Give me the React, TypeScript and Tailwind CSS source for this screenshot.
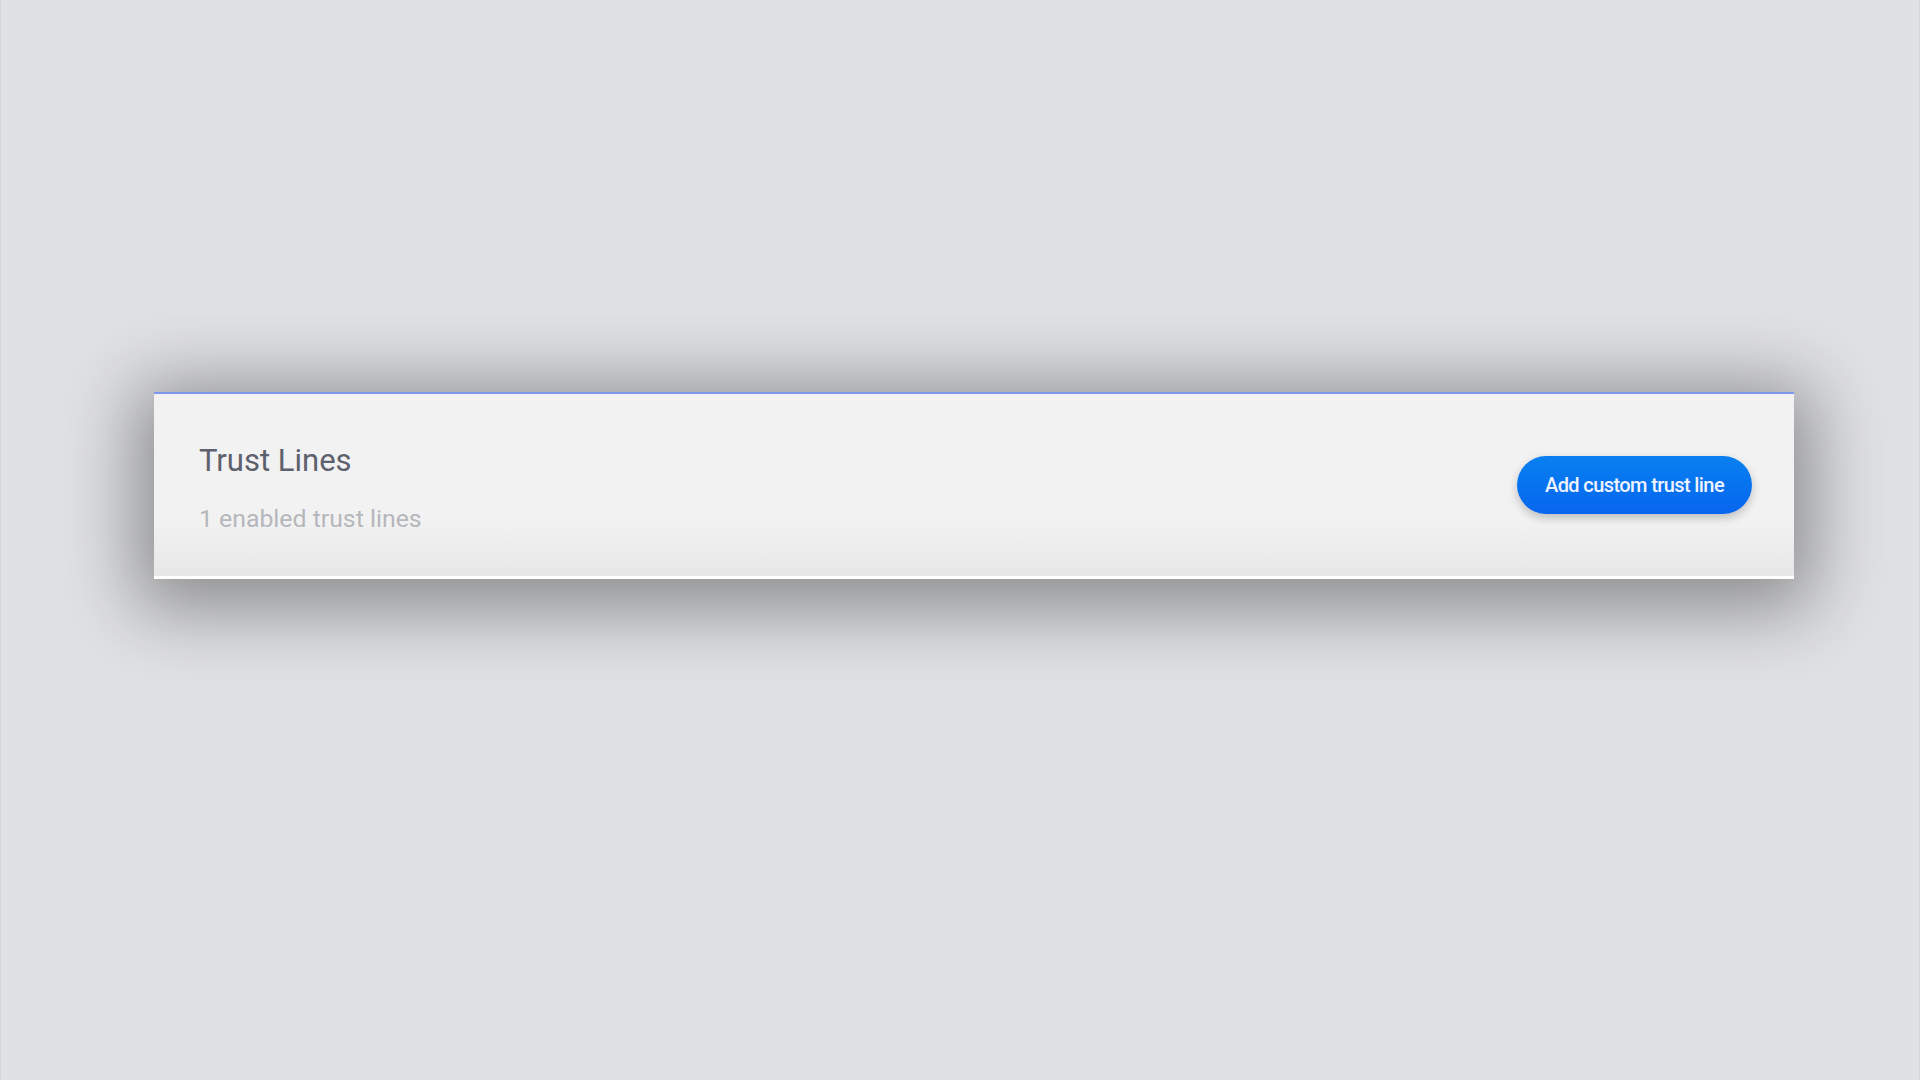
import React from "react";

export default function App() {
  return (
    <div
      className="min-h-screen w-full bg-[#e0e1e3] pl-[153px] pr-[125px] pt-[392px] border-x border-[#d6d7d9]"
      style={{ fontFamily: "Roboto, 'Noto Sans', sans-serif" }}
    >
      <div className="relative flex items-center justify-between border-t-2 border-[#7e96ee] border-b-[3px] border-b-white bg-gradient-to-b from-[#f2f2f2] from-70% to-[#e7e7e7] pl-[45px] pr-[42px] pt-[49px] pb-[42px] shadow-[0_12px_70px_18px_rgba(0,0,0,0.38)]">
        <div className="flex flex-col">
          <div className="text-[31px] leading-[36px] text-[#5d616d]">Trust Lines</div>
          <div className="mt-[25px] text-[24.8px] leading-[30px] text-[#b5b7bc]">1 enabled trust lines</div>
        </div>
        <button className="mb-[7px] h-[58px] rounded-full bg-gradient-to-b from-[#0a80f0] to-[#0865ee] px-[28px] text-[20px] font-medium tracking-[-0.6px] text-[#eef3ff] shadow-[0_4px_10px_rgba(0,0,0,0.22)]">
          Add custom trust line
        </button>
      </div>
    </div>
  );
}
